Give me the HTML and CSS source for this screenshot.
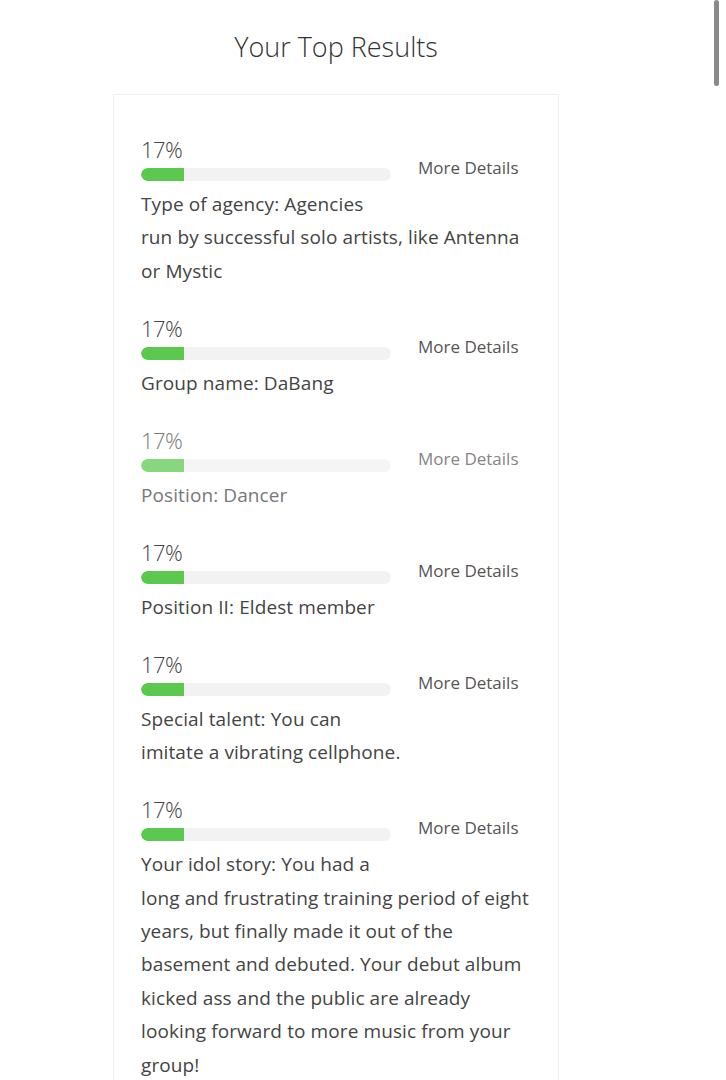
FILE: index.html
```html
<!DOCTYPE html>
<html lang="en">
<head>
    <meta charset="UTF-8">
    <meta name="viewport" content="width=device-width, initial-scale=1.0">
    <title>Your Top Results</title>
    <link rel="stylesheet" href="styles.css">
</head>
<body>
    <div class="scroll-thumb"></div>

    <h1 class="titulo">Your Top Results</h1>

    <div class="cartao">
        <div class="resultado">
            <div class="detalhes">More Details</div>
            <div class="pct">17%</div>
            <div class="barra"><div class="preenche" style="width: 17%"></div></div>
            <p class="texto">Type of agency: Agencies run by successful solo artists, like Antenna or Mystic</p>
        </div>

        <div class="resultado">
            <div class="detalhes">More Details</div>
            <div class="pct">17%</div>
            <div class="barra"><div class="preenche" style="width: 17%"></div></div>
            <p class="texto">Group name: DaBang</p>
        </div>

        <div class="resultado apagado">
            <div class="detalhes">More Details</div>
            <div class="pct">17%</div>
            <div class="barra"><div class="preenche" style="width: 17%"></div></div>
            <p class="texto">Position: Dancer</p>
        </div>

        <div class="resultado">
            <div class="detalhes">More Details</div>
            <div class="pct">17%</div>
            <div class="barra"><div class="preenche" style="width: 17%"></div></div>
            <p class="texto">Position II: Eldest member</p>
        </div>

        <div class="resultado">
            <div class="detalhes">More Details</div>
            <div class="pct">17%</div>
            <div class="barra"><div class="preenche" style="width: 17%"></div></div>
            <p class="texto">Special talent: You can imitate a vibrating cellphone.</p>
        </div>

        <div class="resultado">
            <div class="detalhes">More Details</div>
            <div class="pct">17%</div>
            <div class="barra"><div class="preenche" style="width: 17%"></div></div>
            <p class="texto">Your idol story: You had a long and frustrating training period of eight years, but finally made it out of the basement and debuted. Your debut album kicked ass and the public are already looking forward to more music from your group!</p>
        </div>
    </div>
</body>
</html>
```

FILE: styles.css
```css
* {
    margin: 0;
    padding: 0;
    box-sizing: border-box;
}

body {
    font-family: "Open Sans", Lato, sans-serif;
    background-color: #fff;
    color: #444;
    width: 726px;
    height: 1080px;
    overflow: hidden;
}

.scroll-thumb {
    position: absolute;
    top: 0;
    left: 714px;
    width: 5px;
    height: 86px;
    background-color: #8a8a8a;
    border-radius: 3px;
}

.titulo {
    font-size: 27px;
    font-weight: 300;
    color: #333;
    text-align: center;
    width: 672px;
    padding-top: 30px;
    line-height: 34px;
}

.cartao {
    margin-top: 30px;
    margin-left: 113px;
    width: 446px;
    border: 1px solid #eee;
    padding: 40px 24px 0 27px;
}

.resultado {
    margin-bottom: 25.6px;
}

.detalhes {
    float: right;
    width: 140px;
    height: 60px;
    padding-top: 22px;
    padding-left: 24px;
    font-size: 17px;
    line-height: 22px;
    color: #555;
}

.pct {
    font-size: 22px;
    line-height: 28px;
    font-weight: 300;
    letter-spacing: -0.5px;
    color: #444;
}

.barra {
    width: 250px;
    height: 13px;
    margin-top: 5px;
    background-color: #f2f2f2;
    border-radius: 7px;
    overflow: hidden;
}

.preenche {
    height: 100%;
    background-color: #5bc94f;
    border-radius: 7px 0 0 7px;
}

.texto {
    margin-top: 7px;
    font-size: 19px;
    line-height: 33.4px;
    letter-spacing: 0.1px;
    color: #444;
}

.apagado {
    opacity: 0.72;
}
```
